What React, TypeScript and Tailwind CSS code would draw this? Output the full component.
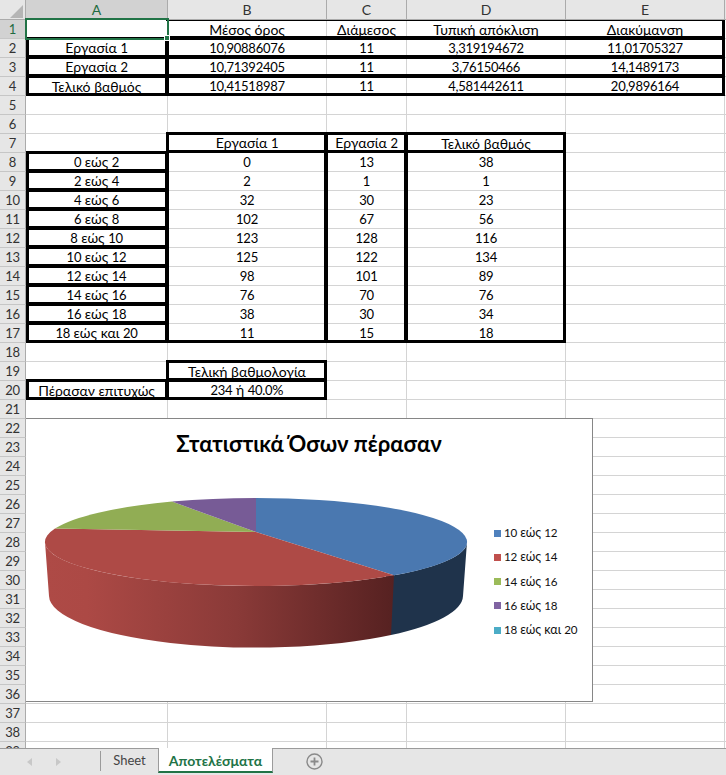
const colWidths = ["w-[142px]", "w-[159px]", "w-[80px]", "w-[159px]", "w-[159px]"];
const colLetters = ["A", "B", "C", "D", "E"];

// edges: which sides of the cell get the thick black border
type Cell = { text: string; edges: string };

const edgeClass: Record<string, string> = {
  t: "border-t-[3px]",
  r: "border-r-[3px]",
  b: "border-b-[3px]",
  l: "border-l-[3px]",
};

function c(text: string, edges: string): Cell {
  return { text, edges };
}

const blank = c("", "");

const statRow = (name: string, a: string, b: string, d: string, e: string) => [
  c(name, "trbl"),
  c(a, "tbl"),
  c(b, "tb"),
  c(d, "tb"),
  c(e, "tbr"),
];

const binRow = (name: string, a: string, b: string, d: string, last = false) => [
  c(name, "trbl"),
  c(a, last ? "lrb" : "lr"),
  c(b, last ? "lrb" : "lr"),
  c(d, last ? "lrb" : "lr"),
];

const rows: Record<number, Cell[]> = {
  1: [blank, c("Μέσος όρος", "tb"), c("Διάμεσος", "tb"), c("Τυπική απόκλιση", "tb"), c("Διακύμανση", "tbr")],
  2: statRow("Εργασία 1", "10,90886076", "11", "3,319194672", "11,01705327"),
  3: statRow("Εργασία 2", "10,71392405", "11", "3,76150466", "14,1489173"),
  4: statRow("Τελικό βαθμός", "10,41518987", "11", "4,581442611", "20,9896164"),
  7: [blank, c("Εργασία 1", "trbl"), c("Εργασία 2", "trbl"), c("Τελικό βαθμός", "trbl")],
  8: binRow("0 εώς 2", "0", "13", "38"),
  9: binRow("2 εώς 4", "2", "1", "1"),
  10: binRow("4 εώς 6", "32", "30", "23"),
  11: binRow("6 εώς 8", "102", "67", "56"),
  12: binRow("8 εώς 10", "123", "128", "116"),
  13: binRow("10 εώς 12", "125", "122", "134"),
  14: binRow("12 εώς 14", "98", "101", "89"),
  15: binRow("14 εώς 16", "76", "70", "76"),
  16: binRow("16 εώς 18", "38", "30", "34"),
  17: binRow("18 εώς και 20", "11", "15", "18", true),
  19: [blank, c("Τελική βαθμολογία", "trbl")],
  20: [c("Πέρασαν επιτυχώς", "trbl"), c("234 ή 40.0%", "trbl")],
};

const legend = [
  { label: "10 εώς 12", color: "bg-[#4f81bd]" },
  { label: "12 εώς 14", color: "bg-[#c0504d]" },
  { label: "14 εώς 16", color: "bg-[#9bbb59]" },
  { label: "16 εώς 18", color: "bg-[#8064a2]" },
  { label: "18 εώς και 20", color: "bg-[#4bacc6]" },
];

// the sheet font's digits run bigger than the reference, so scale them down
function Txt({ value }: { value: string }) {
  const parts = value.split(/([\d,.]+)/);
  return (
    <span>
      {parts.map((p, i) =>
        i % 2 === 1 ? (
          <span key={i} className="text-[0.93em] tracking-[-0.02em]">
            {p}
          </span>
        ) : (
          p
        )
      )}
    </span>
  );
}

function SheetRow({ n }: { n: number }) {
  const cells = rows[n] || [];
  const active = n === 1;
  return (
    <div className="flex h-[19px] shrink-0">
      <div
        className={`relative z-20 w-[26px] shrink-0 flex items-center justify-center border-r border-b border-r-[#ababab] border-b-[#c6c6c6] ${
          active ? "bg-[#d2d2d2] text-[#1f6b41]" : "bg-[#e6e6e6] text-[#333]"
        }`}
      >
        <Txt value={String(n)} />
      </div>
      {colWidths.map((w, i) => {
        const cell = cells[i];
        return (
          <div
            key={i}
            className={`relative ${w} shrink-0 flex items-center justify-center border-r border-b border-[#d4d4d4] whitespace-nowrap text-black`}
          >
            {cell && <Txt value={cell.text} />}
            {cell && cell.edges && (
              <div
                className={`absolute ${i === 0 ? "left-0" : "-left-[2px]"} -top-[2px] -right-[1px] -bottom-[1px] border-black border-0 z-10 ${cell.edges
                  .split("")
                  .map((e) => edgeClass[e])
                  .join(" ")}`}
              />
            )}
          </div>
        );
      })}
      <div className="flex-1 border-b border-[#d4d4d4]" />
    </div>
  );
}

function PieChart() {
  return (
    <svg className="absolute left-0 top-0" width="567" height="284" viewBox="26 418 567 284">
      <defs>
        <linearGradient id="redSide" gradientUnits="userSpaceOnUse" x1="45" y1="0" x2="394" y2="0">
          <stop offset="0" stopColor="#ae4a46" />
          <stop offset="0.12" stopColor="#ac4945" />
          <stop offset="0.55" stopColor="#8a3a38" />
          <stop offset="1" stopColor="#562121" />
        </linearGradient>
      </defs>
      <path d="M467 541 A211 44 0 0 1 394 574.3 L386 575 L386 634 L391 634 A207 52 0 0 0 463 595 Z" fill="#1f334b" />
      <path d="M45 541 A211 44 0 0 0 394 574.3 L391 634 A207 52 0 0 1 49 595 Z" fill="url(#redSide)" />
      <path d="M256 531 L256 497 A211 44 0 0 1 394 574.3 Z" fill="#4a78b0" />
      <path d="M256 531 L394 574.3 A211 44 0 0 1 55 527.6 Z" fill="#ae4a46" />
      <path d="M256 531 L55 527.6 A211 44 0 0 1 172 500.6 Z" fill="#91ad54" />
      <path d="M256 531 L172 500.6 A211 44 0 0 1 256 497 Z" fill="#775b96" />
    </svg>
  );
}

function TabBar() {
  return (
    <div className="relative z-30 h-[27px] shrink-0 flex bg-[#e6e6e6] border-t border-[#9b9b9b] text-[14px]">
      <div className="w-[101px] shrink-0 flex items-center pl-[27px] gap-[23px]">
        <svg width="6" height="8" viewBox="0 0 6 8">
          <path d="M5 0 L0 4 L5 8 Z" fill="#c8c8c8" />
        </svg>
        <svg width="6" height="8" viewBox="0 0 6 8">
          <path d="M0 0 L5 4 L0 8 Z" fill="#c8c8c8" />
        </svg>
        <div className="ml-[15px] w-px h-[20px] bg-[#9b9b9b] -mt-[2px]" />
      </div>
      <div className="w-[57px] shrink-0 flex items-center justify-center text-[13px] text-[#444] pb-[2px]">Sheet</div>
      <div className="w-[115px] shrink-0 -mt-px h-[25px] pt-px flex items-center justify-center bg-white border-x border-[#9b9b9b] border-b-2 border-b-[#217346] font-bold text-[#217346]">
        Αποτελέσματα
      </div>
      <div className="ml-[33px] flex items-center pb-[2px]">
        <svg width="17" height="17" viewBox="0 0 17 17" fill="none" stroke="#8a8a8a">
          <circle cx="8.5" cy="8.5" r="7.5" strokeWidth="1.4" />
          <path d="M8.5 4.5 V12.5 M4.5 8.5 H12.5" strokeWidth="1.8" />
        </svg>
      </div>
    </div>
  );
}

export default function App() {
  const rowNumbers = Array.from({ length: 39 }, (_, i) => i + 1);
  return (
    <div className="relative w-[726px] h-[775px] flex flex-col overflow-hidden bg-white text-[14px] font-['Lato','Noto_Sans',sans-serif]">
      <div className="relative z-20 flex h-[20px] shrink-0 bg-[#e6e6e6] border-b border-[#ababab]">
        <div className="w-[26px] shrink-0 border-r border-[#ababab] relative">
          <svg className="absolute left-[10px] top-[5px]" width="13" height="13" viewBox="0 0 13 13">
            <path d="M13 0 V13 H0 Z" fill="#b5b5b5" />
          </svg>
        </div>
        {colLetters.map((letter, i) => (
          <div
            key={letter}
            className={`${colWidths[i]} shrink-0 flex items-center justify-center border-r border-[#ababab] ${
              i === 0 ? "bg-[#d2d2d2] text-[#1f6b41]" : "text-[#333]"
            }`}
          >
            {letter}
          </div>
        ))}
      </div>

      <div className="relative flex-1 overflow-hidden">
        {rowNumbers.map((n) => (
          <SheetRow key={n} n={n} />
        ))}
      </div>

      {/* selected cell A1 */}
      <div className="absolute left-[25px] top-[18px] w-[144px] h-[22px] border-2 border-[#217346] z-30">
        <div className="absolute -right-[3px] -bottom-[3px] w-[6px] h-[6px] bg-[#217346] border border-white" />
      </div>

      {/* chart sits on top of the cells */}
      <div className="absolute left-[26px] top-[418px] w-[567px] h-[284px] bg-white border-t border-r border-b border-[#868686] z-20">
        <PieChart />
        <div className="absolute left-0 right-0 top-[11px] text-center text-[22px] leading-[28px] font-bold text-black">
          Στατιστικά Όσων πέρασαν
        </div>
        <div className="absolute left-[468px] top-[105px] flex flex-col gap-[6.3px] text-[12.5px] leading-[18px] text-[#111]">
          {legend.map((l) => (
            <div key={l.label} className="flex items-center gap-[3px] whitespace-nowrap">
              <span className={`w-[7px] h-[7px] ${l.color}`} />
              <Txt value={l.label} />
            </div>
          ))}
        </div>
      </div>

      <TabBar />
    </div>
  );
}
